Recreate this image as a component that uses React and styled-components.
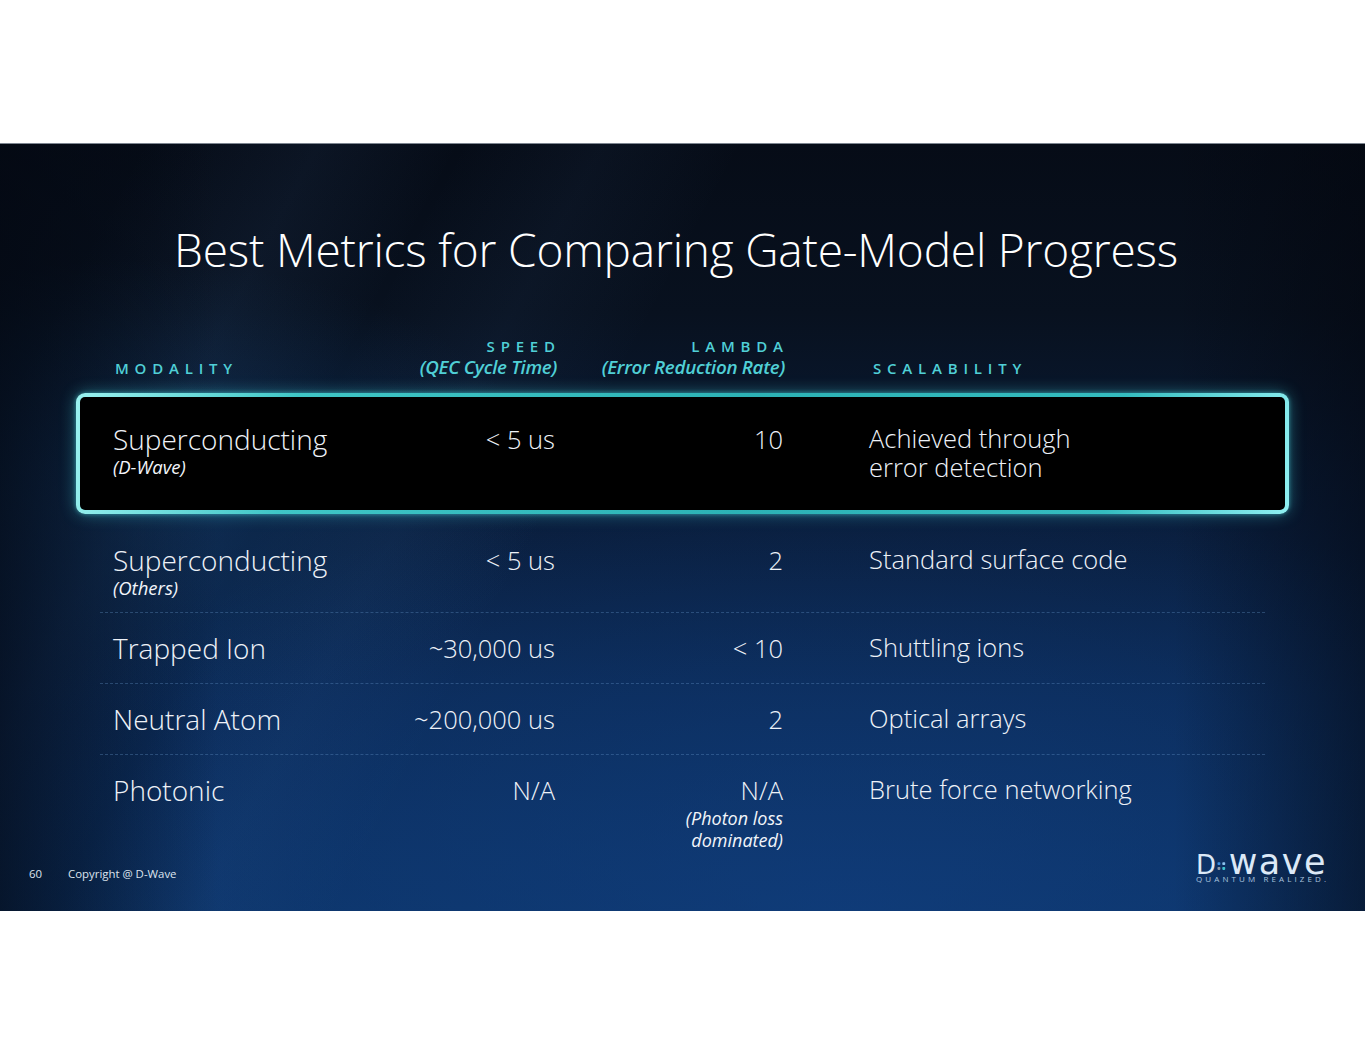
import React from "react";
import styled, { createGlobalStyle, css } from "styled-components";

const GlobalStyle = createGlobalStyle`
  html, body { margin: 0; padding: 0; background: #ffffff; }
  body { font-family: "Open Sans", "Liberation Sans", sans-serif; }
  * { box-sizing: border-box; }
`;

const Page = styled.div`
  width: 1365px;
  height: 1055px;
  padding-top: 143px;
  background: #ffffff;
`;

const Slide = styled.section`
  position: relative;
  width: 1365px;
  height: 768px;
  display: flex;
  flex-direction: column;
  padding-top: 78px;
  color: #eef2f8;
  font-family: "Open Sans", "Liberation Sans", sans-serif;
  background:
    linear-gradient(90deg, rgba(3, 8, 18, 0.7) 0%, rgba(3, 8, 18, 0) 16%),
    linear-gradient(270deg, rgba(3, 6, 14, 0.55) 0%, rgba(3, 6, 14, 0) 14%),
    radial-gradient(ellipse 30% 30% at 10% 45%, rgba(20, 70, 120, 0.35) 0%, rgba(20, 70, 120, 0) 100%),
    radial-gradient(ellipse 70% 55% at 62% 100%, rgba(18, 66, 135, 0.55) 0%, rgba(18, 66, 135, 0) 100%),
    linear-gradient(118deg, rgba(255,255,255,0) 8%, rgba(90,140,210,0.07) 18%, rgba(255,255,255,0) 26%, rgba(90,140,210,0.05) 34%, rgba(255,255,255,0) 42%),
    linear-gradient(180deg, #060c17 0%, #08111f 22%, #0a1d3b 48%, #0b2a56 72%, #0c3366 100%);
  border-top: 1px solid #7d8590;
`;

const Title = styled.h1`
  margin: 0;
  padding-right: 13px;
  text-align: center;
  font-size: 46px;
  line-height: 55px;
  font-weight: 300;
  color: #ffffff;
  letter-spacing: -0.2px;
`;

const Table = styled.div`
  margin-left: 100px;
  width: 1165px;
  display: flex;
  flex-direction: column;
`;

const gridCols = css`
  display: grid;
  grid-template-columns: 300px 142px 228px 1fr;
`;

const HeaderRow = styled.div`
  ${gridCols};
  align-items: end;
  padding: 0 13px;
  margin-top: 59px;
  margin-bottom: 15px;
`;

const HeadCell = styled.div`
  display: flex;
  flex-direction: column;
  align-items: ${(p) => (p.$right ? "flex-end" : "flex-start")};
  padding-left: ${(p) => p.$pl || 0}px;
  margin-right: ${(p) => (p.$right ? -2 : 0)}px;
  color: #50cfd6;
`;

const Caps = styled.span`
  font-size: 15px;
  line-height: 20px;
  font-weight: 600;
  letter-spacing: 5.8px;
  margin-right: ${(p) => (p.$right ? -3.8 : 0)}px;
`;

const HeadNote = styled.span`
  font-size: 18.8px;
  line-height: 22px;
  font-weight: 600;
  font-style: italic;
  letter-spacing: -0.3px;
`;

const Row = styled.div`
  ${gridCols};
  align-items: start;
  ${(p) =>
    p.$hl
      ? css`
          margin: 0 -24px 11px;
          padding: 25px 33px 28px;
          border: 4px solid transparent;
          border-radius: 9px;
          background:
            linear-gradient(#000, #000) padding-box,
            linear-gradient(100deg, #9af2f0 0%, #3fc6c6 18%, #2cb2b5 55%, #34bcbf 85%, #8ff0f2 100%) border-box;
          box-shadow: 0 0 16px rgba(64, 205, 215, 0.45), 0 0 4px rgba(90, 225, 230, 0.5);
        `
      : css`
          padding: 18px 13px ${p.$pb}px;
          border-bottom: ${p.$last ? "none" : "1px dashed rgba(110, 160, 210, 0.32)"};
        `}
`;

const Cell = styled.div`
  display: flex;
  flex-direction: column;
  align-items: ${(p) => (p.$right ? "flex-end" : "flex-start")};
  text-align: ${(p) => (p.$right ? "right" : "left")};
`;

const Main = styled.span`
  font-size: ${(p) => p.$size || 28}px;
  line-height: 34px;
  font-weight: 300;
  color: #eef2f8;
  white-space: nowrap;
`;

const ScalCell = styled.div`
  padding-left: 86px;
  padding-top: 2px;
  font-size: 25.5px;
  line-height: 29px;
  font-weight: 300;
  color: #eef2f8;
  white-space: nowrap;
`;

const Note = styled.span`
  font-size: ${(p) => p.$size || 18.5}px;
  line-height: ${(p) => p.$lh || 21}px;
  font-style: italic;
  font-weight: 400;
  color: #f2f5fa;
  white-space: nowrap;
`;

const Footer = styled.footer`
  margin-top: auto;
  display: flex;
  justify-content: space-between;
  align-items: flex-end;
  padding: 0 38px 27px 29px;
`;

const FootLeft = styled.div`
  display: flex;
  gap: 26px;
  font-size: 11.4px;
  line-height: 16px;
  color: #dde4ee;
  margin-bottom: 2px;
`;

const Logo = styled.div`
  display: flex;
  flex-direction: column;
  align-items: stretch;
  width: 131px;
`;

const Mark = styled.div`
  display: flex;
  align-items: baseline;
  color: #dce9f7;
  font-family: "DejaVu Sans", "Liberation Sans", sans-serif;
  line-height: 20px;
  height: 20px;
`;

const MarkD = styled.span`
  font-size: 26px;
  font-weight: 400;
`;

const MarkWave = styled.span`
  font-size: 35px;
  font-weight: 400;
  letter-spacing: 1.5px;
`;

const Tagline = styled.div`
  margin-top: 2px;
  font-size: 8px;
  line-height: 10px;
  letter-spacing: 3.1px;
  color: #a9c3df;
  white-space: nowrap;
`;

const rows = [
  { name: "Superconducting", note: "(D-Wave)", speed: "< 5 us", lambda: "10", scal: ["Achieved through", "error detection"], hl: true },
  { name: "Superconducting", note: "(Others)", speed: "< 5 us", lambda: "2", scal: ["Standard surface code"], pb: 14 },
  { name: "Trapped Ion", speed: "~30,000 us", lambda: "< 10", scal: ["Shuttling ions"], pb: 18 },
  { name: "Neutral Atom", speed: "~200,000 us", lambda: "2", scal: ["Optical arrays"], pb: 18 },
  { name: "Photonic", speed: "N/A", lambda: "N/A", lambdaNote: ["(Photon loss", "dominated)"], scal: ["Brute force networking"], last: true, pb: 0 },
];

function Dots() {
  return (
    <svg width="10" height="14" viewBox="0 0 10 14" style={{ margin: "0 2px 0 1px" }}>
      <rect x="0.5" y="2" width="3" height="3" rx="0.8" fill="#3d8fe0" />
      <rect x="5.5" y="2" width="3" height="3" rx="0.8" fill="#8cc2ee" />
      <rect x="0.5" y="7" width="3" height="3" rx="0.8" fill="#8d98a6" />
      <rect x="5.5" y="7" width="3" height="3" rx="0.8" fill="#3cc3cf" />
    </svg>
  );
}

export default function App() {
  return (
    <>
      <GlobalStyle />
      <Page>
        <Slide>
          <Title>Best Metrics for Comparing Gate-Model Progress</Title>
          <Table>
            <HeaderRow>
              <HeadCell $pl={2}>
                <Caps>MODALITY</Caps>
              </HeadCell>
              <HeadCell $right>
                <Caps $right>SPEED</Caps>
                <HeadNote>(QEC Cycle Time)</HeadNote>
              </HeadCell>
              <HeadCell $right>
                <Caps $right>LAMBDA</Caps>
                <HeadNote>(Error Reduction Rate)</HeadNote>
              </HeadCell>
              <HeadCell $pl={90}>
                <Caps>SCALABILITY</Caps>
              </HeadCell>
            </HeaderRow>
            {rows.map((r, i) => (
              <Row key={i} $hl={r.hl} $last={r.last} $pb={r.pb}>
                <Cell>
                  <Main>{r.name}</Main>
                  {r.note && <Note>{r.note}</Note>}
                </Cell>
                <Cell $right>
                  <Main $size={25.5}>{r.speed}</Main>
                </Cell>
                <Cell $right>
                  <Main $size={25.5}>{r.lambda}</Main>
                  {r.lambdaNote &&
                    r.lambdaNote.map((t) => (
                      <Note key={t} $size={18} $lh={22}>
                        {t}
                      </Note>
                    ))}
                </Cell>
                <ScalCell>
                  {r.scal.map((t, j) => (
                    <div key={j}>{t}</div>
                  ))}
                </ScalCell>
              </Row>
            ))}
          </Table>
          <Footer>
            <FootLeft>
              <span>60</span>
              <span>Copyright @ D-Wave</span>
            </FootLeft>
            <Logo>
              <Mark>
                <MarkD>D</MarkD>
                <Dots />
                <MarkWave>wave</MarkWave>
              </Mark>
              <Tagline>QUANTUM REALIZED.</Tagline>
            </Logo>
          </Footer>
        </Slide>
      </Page>
    </>
  );
}
